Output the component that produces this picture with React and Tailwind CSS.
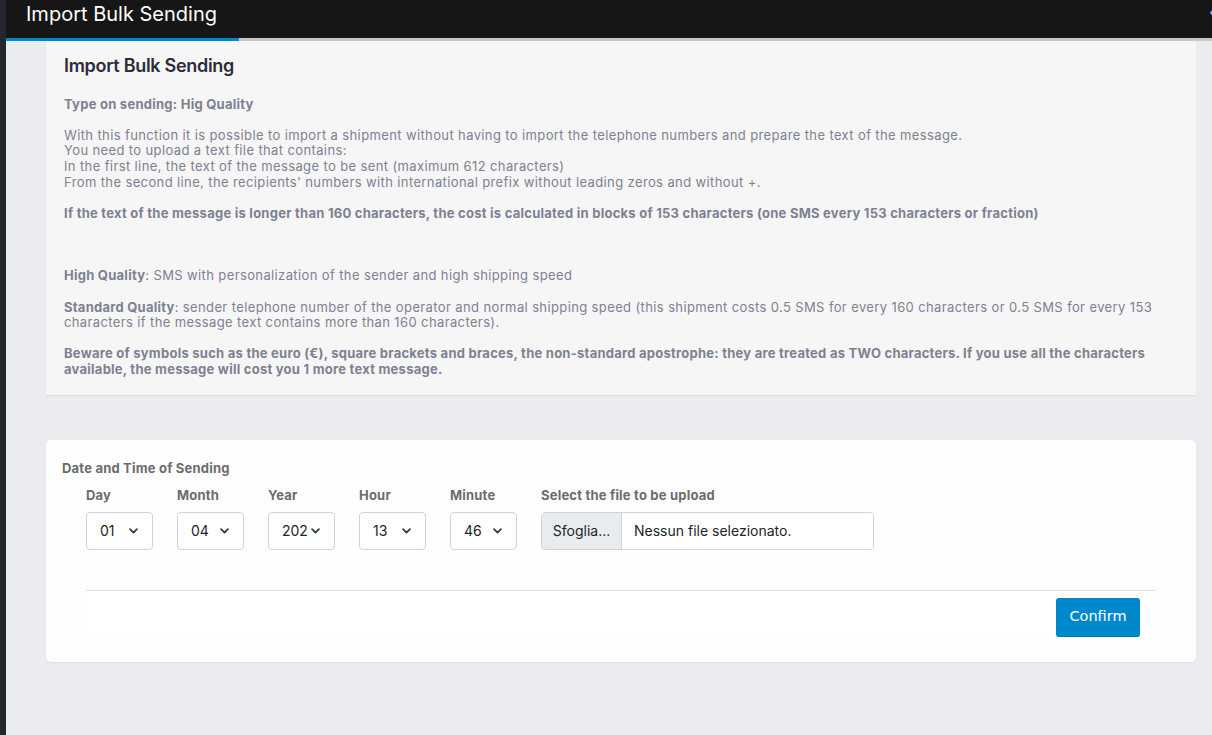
import React from 'react';

const font = { fontFamily: 'Inter, "Noto Sans", sans-serif' };

const Chevron = () => (
  <svg width="11" height="11" viewBox="0 0 16 16" fill="none" stroke="#343a40" strokeWidth="2.6" strokeLinecap="round" strokeLinejoin="round">
    <path d="M3 6l5 5 5-5" />
  </svg>
);

const FakeSelect = ({ value }) => (
  <div className="flex items-center justify-between w-[67px] h-[38px] pl-[13px] pr-[13px] bg-white border border-[#ced4da] rounded-[4px] text-[14px] text-[#212529]">
    <span className="w-[26px] overflow-hidden whitespace-nowrap">{value}</span>
    <Chevron />
  </div>
);

const fields = [
  { label: 'Day', value: '01' },
  { label: 'Month', value: '04' },
  { label: 'Year', value: '2025' },
  { label: 'Hour', value: '13' },
  { label: 'Minute', value: '46' },
];

export default function App() {
  return (
    <div className="flex w-[1212px] h-[735px] overflow-hidden bg-[#ebecf0]" style={font}>
      <div className="w-[6px] shrink-0 bg-[#23262d]" />
      <div className="flex-1 flex flex-col min-w-0">
        <div className="relative h-[38px] bg-[#161616] flex items-center pl-[20px] shrink-0">
          <h1 className="text-white text-[20px] leading-none -mt-[10px]">Import Bulk Sending</h1>
          <span className="absolute right-[-4px] top-[3px] text-[#8fb8dd] text-[18px] leading-none">‹</span>
        </div>
        <div className="flex h-[3px] shrink-0">
          <div className="w-[233px] bg-[#0088cc]" />
          <div className="flex-1 bg-[#c8c8c8]" />
        </div>

        <div className="pl-[40px] pr-[16px]">
          <div className="bg-[#f6f6f6] border-b border-[#dcdcdc] pl-[18px] pr-[30px] pt-[14px] pb-[17px] text-[13px] leading-[1.2] tracking-[0.38px] text-[#7d8192]">
            <h2 className="text-[18px] font-semibold text-[#2b2d3a] tracking-[-0.3px] mb-[20px]">Import Bulk Sending</h2>
            <p className="font-bold tracking-[0.25px] mb-[15.6px]">Type on sending: Hig Quality</p>
            <p className="mb-[15.6px]">
              With this function it is possible to import a shipment without having to import the telephone numbers and prepare the text of the message.
              <br />
              You need to upload a text file that contains:
              <br />
              In the first line, the text of the message to be sent (maximum 612 characters)
              <br />
              From the second line, the recipients' numbers with international prefix without leading zeros and without +.
            </p>
            <p className="font-bold tracking-[0.25px] mb-[47px]">
              If the text of the message is longer than 160 characters, the cost is calculated in blocks of 153 characters (one SMS every 153 characters or fraction)
            </p>
            <p className="mb-[15.6px]">
              <b className="tracking-[0.25px]">High Quality</b>: SMS with personalization of the sender and high shipping speed
            </p>
            <p className="mb-[15.6px]">
              <b className="tracking-[0.25px]">Standard Quality</b>: sender telephone number of the operator and normal shipping speed (this shipment costs 0.5 SMS for every 160 characters or 0.5 SMS for every 153 characters if the message text contains more than 160 characters).
            </p>
            <p className="font-bold tracking-[0.25px]">
              Beware of symbols such as the euro (€), square brackets and braces, the non-standard apostrophe: they are treated as TWO characters. If you use all the characters available, the message will cost you 1 more text message.
            </p>
          </div>

          <div className="mt-[44px] bg-[#fefefe] rounded-[5px] shadow-[0_1px_2px_rgba(0,0,0,0.06)] pt-[19px] pb-[25px] pl-[16px] pr-[40px]">
            <p className="text-[13px] font-bold tracking-[0.2px] text-[#6c6c6c] mb-[8px]">Date and Time of Sending</p>
            <div className="pl-[24px]">
              <div className="flex gap-[24px] pb-[40px] border-b border-[#dedede]">
                {fields.map((f) => (
                  <div key={f.label} className="flex flex-col">
                    <span className="text-[13px] font-bold tracking-[0.2px] text-[#6c6c6c] mb-[6px]">{f.label}</span>
                    <FakeSelect value={f.value} />
                  </div>
                ))}
                <div className="flex flex-col">
                  <span className="text-[13px] font-bold tracking-[0.2px] text-[#6c6c6c] mb-[6px]">Select the file to be upload</span>
                  <div className="flex w-[333px] h-[38px] border border-[#ced4da] rounded-[4px] overflow-hidden text-[14px] text-[#212529]">
                    <div className="w-[80px] bg-[#e9ecef] border-r border-[#ced4da] flex items-center justify-center">Sfoglia...</div>
                    <div className="flex-1 bg-white flex items-center pl-[12px]">Nessun file selezionato.</div>
                  </div>
                </div>
              </div>
              <div className="flex justify-end bg-white pt-[7px] pr-[16px]">
                <button className="w-[84px] h-[39px] bg-[#0088cc] rounded-[3px] border-b border-[#0074ad] text-white text-[14.5px]" style={{ fontFamily: '"DejaVu Sans", Verdana, sans-serif' }}>
                  Confirm
                </button>
              </div>
            </div>
          </div>
        </div>
      </div>
    </div>
  );
}
